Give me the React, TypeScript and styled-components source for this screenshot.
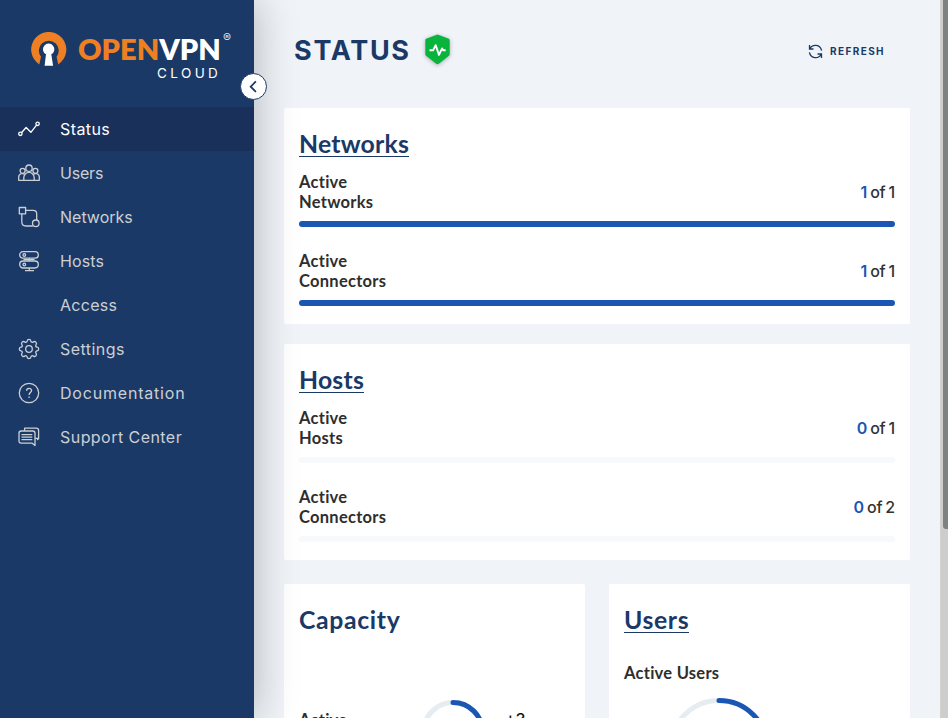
import React from "react";
import styled, { createGlobalStyle } from "styled-components";

const Global = createGlobalStyle`
  *{box-sizing:border-box}
  html,body{margin:0;height:100%;overflow:hidden;background:#f0f4f9}
  h1,h2,p{margin:0}
`;
const ui = `"Inter","Noto Sans",sans-serif`;
const head = `"Lato","Open Sans",sans-serif`;

const Page = styled.div`display:flex;width:948px;height:718px;overflow:hidden;font-family:${ui};background:#f0f4f9;`;
const Sidebar = styled.aside`
  position:relative;z-index:2;flex:0 0 254px;height:718px;background:#1b3967;
  box-shadow:0 0 40px rgba(0,0,0,.28);
`;
const Brand = styled.div`display:flex;height:107px;padding:32px 0 0 30px;align-items:flex-start;`;
const BrandText = styled.div`display:flex;flex-direction:column;width:145px;margin-left:10px;`;
const Word = styled.div`
  font:800 29px/34px ${head};color:#fff;white-space:nowrap;
  b{font-weight:800;color:#ee7f22}
`;
const Cloud = styled.div`font:400 13.5px/14px ${ui};letter-spacing:3.4px;color:#fff;margin:0 0 0 79px;`;
const Reg = styled.span`font:400 12px/12px ${ui};color:#dfe5ee;`;
const Collapse = styled.button`
  position:absolute;left:240px;top:73px;width:27px;height:27px;border-radius:50%;padding:0;
  border:1px solid #1b3967;background:#fff;display:flex;align-items:center;justify-content:center;
`;
const Item = styled.a<{ $active?: boolean }>`
  display:flex;align-items:center;height:44px;padding-left:18px;
  color:${p => (p.$active ? "#fff" : "#cccfd3")};background:${p => (p.$active ? "#19305b" : "transparent")};
`;
const IconSlot = styled.span`display:flex;width:22px;height:22px;margin-right:20px;`;
const ItemLabel = styled.span<{ $ls: number }>`font:400 16px/24px ${ui};letter-spacing:${p => p.$ls}px;`;
const Main = styled.main`flex:0 0 686px;padding:0 30px;overflow:hidden;height:718px;`;
const Header = styled.header`display:flex;height:108px;padding:33px 25px 0 10px;align-items:flex-start;`;
const Title = styled.h1`font:650 27px/36px ${ui};letter-spacing:1.7px;color:#1b3967;width:130px;`;
const Shield = styled.span`display:flex;margin-top:1px;filter:drop-shadow(0 1px 2px rgba(0,0,0,.3));`;
const Refresh = styled.button`
  margin:8px 0 0 auto;display:flex;align-items:center;gap:7px;border:0;background:none;padding:0;height:20px;
  font:700 10px/20px ${ui};letter-spacing:1.4px;color:#1b3967;
`;
const Card = styled.section<{ $h: number }>`background:#fff;border-radius:2px;padding:20px 15px 0;height:${p => p.$h}px;`;
const Stack = styled.div`display:grid;gap:20px;`;
const Duo = styled.div`display:grid;grid-template-columns:1fr 1fr;gap:24px;margin-top:24px;`;
const CardTitle = styled.h2<{ $link?: boolean; $ls?: number }>`
  width:fit-content;font:700 24.8px/27px ${head};color:#1b3967;letter-spacing:${p => p.$ls ?? 0.2}px;
  border-bottom:${p => (p.$link ? "1px solid #1b3967" : "0")};height:29px;padding-top:2px;
`;
const Meter = styled.div`margin-bottom:24px;`;
const MeterHead = styled.div`display:flex;justify-content:space-between;align-items:center;height:40px;margin-bottom:9px;`;
const Label = styled.p<{ $w?: number; $top?: number }>`
  font:700 16.5px/20px ${head};color:#2e2e2e;letter-spacing:.27px;width:${p => p.$w ?? 92}px;margin-top:${p => p.$top ?? 0}px;
`;
const Count = styled.p`font:500 16px/20px ${ui};color:#333;letter-spacing:-.2px;word-spacing:-1px;b{font-weight:600;color:#1a56b4}`;
const Track = styled.div<{ $full: boolean }>`height:6px;border-radius:3px;background:${p => (p.$full ? "#1a56b4" : "#f8f9fd")};`;
const Meters = styled.div`margin-top:15px;`;
const CapacityBody = styled.div`display:flex;align-items:flex-start;margin-top:63px;height:90px;`;
const ScrollTrack = styled.div`flex:0 0 8px;height:718px;background:#cdcdcd;border-left:1px solid #d6d0cb;display:flex;justify-content:flex-end;`;
const ScrollThumb = styled.div`width:5px;height:529px;background:#7f8283;border-radius:0 0 0 3px;`;
const CapacityRing = styled.div`margin:4px 0 0 30px;`;
const Limit = styled.p`font:500 16px/20px ${ui};color:#111;margin:13px 0 0 20px;`;
const UsersBody = styled.div`padding-top:30px;`;
const UsersRing = styled.div`margin:15px 0 0 44px;`;

const Ring = ({ size, stroke }: { size: number; stroke: number }) => {
  const r = (size - stroke) / 2, c = size / 2;
  return <svg width={size} height={size} fill="none" strokeWidth={stroke} display="block">
    <circle cx={c} cy={c} r={r} stroke="#e5ecf2" />
    <path d={`M${c} ${c - r}A${r} ${r} 0 0 1 ${c + r} ${c}`} stroke="#1a56b4" strokeLinecap="round" />
  </svg>;
};

const Svg = ({ children }: { children: React.ReactNode }) => (
  <svg width="22" height="22" viewBox="0 0 22 22" fill="none" stroke="currentColor" strokeWidth="1.3" strokeLinejoin="round">{children}</svg>
);
const icons: Record<string, React.ReactNode> = {
  Status: <Svg><circle cx="2.4" cy="15.8" r="1.7" /><circle cx="19.6" cy="5.8" r="1.7" /><path d="M3.7 14.5 8.1 9.5l4.8 4.8L18.5 7.2" /></Svg>,
  Users: <Svg><circle cx="11" cy="6.2" r="3.2" /><circle cx="4.6" cy="8.8" r="2.5" /><circle cx="17.4" cy="8.8" r="2.5" /><path d="M5.8 18.3v-2.7a5.2 5.2 0 0 1 10.4 0v2.7ZM5.8 18.3H.7v-3.2c0-3.7 4.2-4.4 6.3-2.5M16.2 18.3h5.1v-3.2c0-3.7-4.2-4.4-6.3-2.5" /></Svg>,
  Networks: <Svg><rect x="1.3" y="1.5" width="6.3" height="6.3" /><path d="M7.6 4.4h7.6c2.5 0 3.5 1 3.5 3.5v6M3.8 7.8v8c0 3 1.2 4.2 4 4.2h7" /><circle cx="17.8" cy="17.3" r="3.3" /></Svg>,
  Hosts: <Svg><rect x="1.7" y="1.7" width="18.6" height="6.5" rx="3.2" /><rect x="1.7" y="11" width="18.6" height="7" rx="3.4" /><circle cx="6.3" cy="5" r="1.3" /><circle cx="6.3" cy="14.5" r="1.3" /><path d="M11.3 8.2V11M11.3 18v2.7M7 20.7h9M5.5 9.6h11" /></Svg>,
  Settings: <Svg><circle cx="11" cy="11" r="3.3" /><path d="M9.2 2.9C9.5.8 12.5.8 12.8 2.9c.3 1.4 1.4 1.8 2.6 1 1.8-1.2 3.9.9 2.7 2.7-.8 1.2-.4 2.3 1 2.6 2.1.3 2.1 3.3 0 3.6-1.4.3-1.8 1.4-1 2.6 1.2 1.8-.9 3.9-2.7 2.7-1.2-.8-2.3-.4-2.6 1-.3 2.1-3.3 2.1-3.6 0-.3-1.4-1.4-1.8-2.6-1-1.8 1.2-3.9-.9-2.7-2.7.8-1.2.4-2.3-1-2.6-2.1-.3-2.1-3.3 0-3.6 1.4-.3 1.8-1.4 1-2.6-1.2-1.8.9-3.9 2.7-2.7 1.2.8 2.3.4 2.6-1Z" /></Svg>,
  Documentation: <Svg><circle cx="11" cy="11" r="9.7" /><path d="M8.6 8.7c0-3.1 5-3 5-.1 0 2-2.5 2-2.5 4.3M11.1 14.6v1.4" /></Svg>,
  "Support Center": <Svg><path d="M3.2 5h11.6c1.5 0 2.2.8 2.2 2.2v12.4l-3.1-2.5H3.2C1.7 17.1 1 16.3 1 14.9V7.2C1 5.8 1.7 5 3.2 5ZM6.6 4.8V2.2h11.6c1.6 0 2.4.8 2.4 2.2v8.3l-1 .8v-1.2h-2.4M3.5 8.7h10.8M3.5 11.2h10.8M3.5 13.7h10.8" /></Svg>,
};
const nav: [string, number][] = [["Status", 0.4], ["Users", -0.2], ["Networks", 0], ["Hosts", 0.1], ["Access", 0.3], ["Settings", 0.45], ["Documentation", 0.8], ["Support Center", 0.45]];

const MeterRow = ({ name, a, b }: { name: string; a: number; b: number }) => (
  <Meter>
    <MeterHead><Label>Active {name}</Label><Count><b>{a}</b> of {b}</Count></MeterHead>
    <Track $full={a > 0} />
  </Meter>
);

export default function App() {
  return <><Global /><Page>
    <Sidebar>
      <Brand>
        <svg width="38" height="36" viewBox="0 0 38 36">
          <path d="M9.3 32.4A17.6 17.6 0 1 1 28.2 32.4L26.6 24.7A9.9 9.9 0 1 0 11 24.7Z" fill="#ee7f22" />
          <path d="M14.6 33.8 16 22.3a5.7 5.7 0 1 1 5.3 0l1.8 11.5Z" fill="#fff" />
        </svg>
        <BrandText><Word><b>OPEN</b>VPN</Word><Cloud>CLOUD</Cloud></BrandText>
        <Reg>®</Reg>
      </Brand>
      <nav>{nav.map(([n, ls]) => <Item key={n} $active={n === "Status"}><IconSlot>{icons[n]}</IconSlot><ItemLabel $ls={ls}>{n}</ItemLabel></Item>)}</nav>
      <Collapse aria-label="Collapse"><svg width="13" height="13" viewBox="0 0 13 13" fill="none" stroke="#1b3967" strokeWidth="1.8"><path d="M8.9 1.4 3.7 6.7l5.2 5.2" /></svg></Collapse>
    </Sidebar>
    <Main>
      <Header>
        <Title>STATUS</Title>
        <Shield><svg width="27" height="31" viewBox="0 0 27 31"><path d="M13.5.6 24.3 4.6c1 .4 1.4 1 1.4 2v13.1c0 1.2-.4 1.9-1.4 2.6l-9.5 7.5c-.9.6-1.7.6-2.6 0l-9.5-7.5C1.7 21.6 1.3 20.9 1.3 19.7V6.6c0-1 .4-1.6 1.4-2Z" fill="#08b43c" /><path d="M5.5 16.2h3.6l2.6-5 3.3 9.7 3.1-6.5 1 1.8h2.6" fill="none" stroke="#fff" strokeWidth="1.9" strokeLinejoin="round" /></svg></Shield>
        <Refresh><svg width="15" height="15" viewBox="0 0 15 15" fill="none" stroke="#1b3967" strokeWidth="1.3"><path d="M1.5 1v4h4M1.7 4.8C4.5-.2 12.3.2 13.6 6.6M13.5 14v-4h-4M13.3 10.2C10.5 15.2 2.7 14.8 1.4 8.4" /></svg>REFRESH</Refresh>
      </Header>
      <Stack>
        <Card $h={216}><CardTitle $link>Networks</CardTitle><Meters><MeterRow name="Networks" a={1} b={1} /><MeterRow name="Connectors" a={1} b={1} /></Meters></Card>
        <Card $h={216}><CardTitle $link>Hosts</CardTitle><Meters><MeterRow name="Hosts" a={0} b={1} /><MeterRow name="Connectors" a={0} b={2} /></Meters></Card>
      </Stack>
      <Duo>
        <Card $h={240}><CardTitle $ls={0.65}>Capacity</CardTitle><CapacityBody><Label $top={14}>Active Connections</Label><CapacityRing><Ring size={64} stroke={5} /></CapacityRing><Limit>+3</Limit></CapacityBody></Card>
        <Card $h={240}><CardTitle $link $ls={0.6}>Users</CardTitle><UsersBody><Label $w={150}>Active Users</Label><UsersRing><Ring size={102} stroke={5} /></UsersRing></UsersBody></Card>
      </Duo>
    </Main>
    <ScrollTrack><ScrollThumb /></ScrollTrack>
  </Page></>;
}
